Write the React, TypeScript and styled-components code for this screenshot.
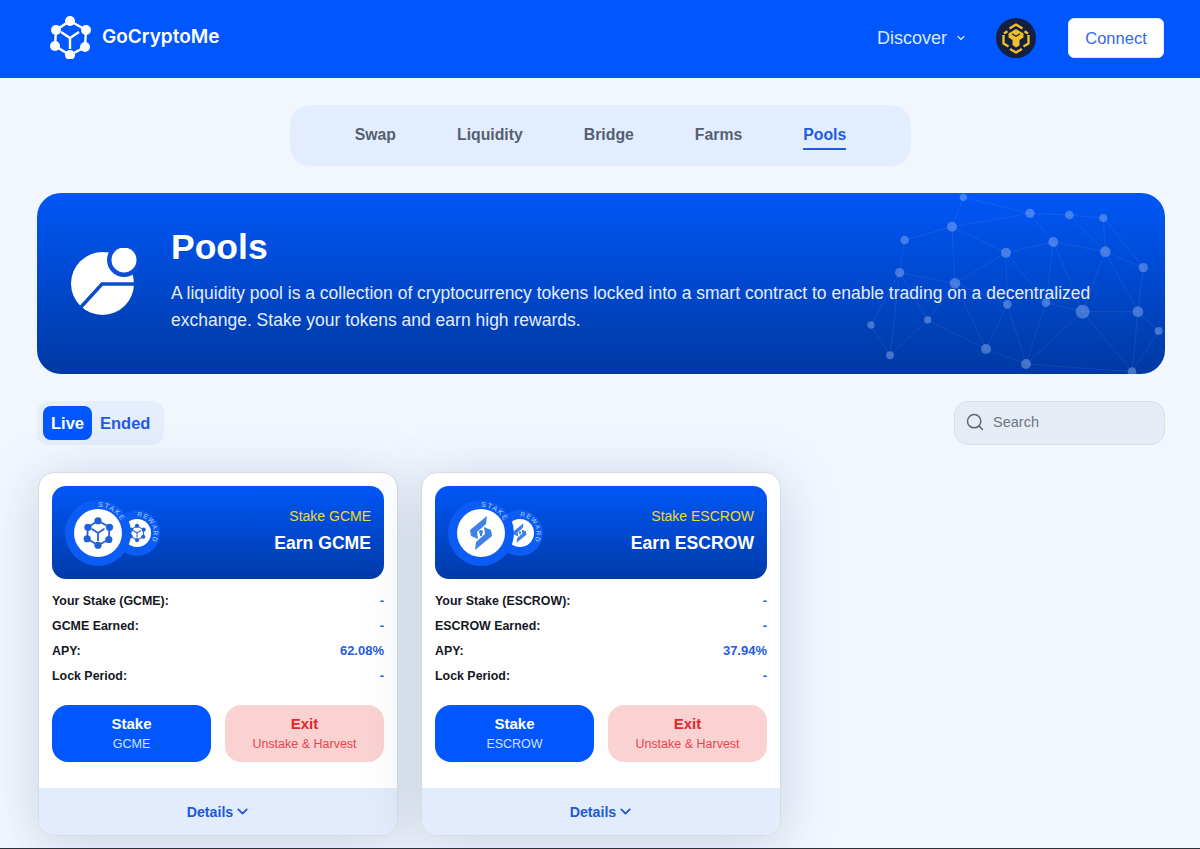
import React from "react";
import styled, { createGlobalStyle } from "styled-components";
import { ChevronDown, Search } from "lucide-react";

const GlobalStyle = createGlobalStyle`
  html, body {
    margin: 0;
    padding: 0;
    background: #f2f7ff;
    font-family: "Liberation Sans", Arial, sans-serif;
  }
  * { box-sizing: border-box; }
`;

const Page = styled.div`
  height: 849px;
  overflow: hidden;
  border-bottom: 1px solid #2c3038;
`;

const Header = styled.header`
  height: 78px;
  background: #0057ff;
  display: flex;
  align-items: center;
  padding: 0 36px 2px 48px;
`;

const Brand = styled.div`
  display: flex;
  align-items: center;
  gap: 10px;
  flex: 1;
  margin-top: -2px;
`;

const BrandName = styled.span`
  margin-bottom: 2px;
  color: #fff;
  font-family: Inter, sans-serif;
  font-size: 19px;
  font-weight: 600;
`;

const NavLink = styled.div`
  display: flex;
  align-items: center;
  gap: 8px;
  color: #dbe8ff;
  font-size: 18px;
`;

const ChainBadge = styled.div`
  display: flex;
  margin: 0 32px 0 29px;
`;

const ConnectButton = styled.button`
  width: 96px;
  height: 40px;
  border: 1px solid #dfe8ff;
  border-radius: 6px;
  background: #fff;
  color: #3567e6;
  font: 400 16.5px "Liberation Sans", Arial, sans-serif;
`;

const Main = styled.main`
  padding: 27px 35px 0 37px;
`;

const TabBar = styled.nav`
  width: 621px;
  height: 61px;
  margin: 0 0 27px 253px;
  border-radius: 20px;
  background: #e2eeff;
  display: flex;
  align-items: center;
  justify-content: center;
  gap: 61px;
`;

const Tab = styled.span<{ $active?: boolean }>`
  font-size: 15.8px;
  font-weight: 700;
  line-height: 26px;
  color: ${(p) => (p.$active ? "#1f5ce0" : "#565f70")};
  border-bottom: 2px solid ${(p) => (p.$active ? "#1f5ce0" : "transparent")};
`;

const Hero = styled.section`
  position: relative;
  height: 181px;
  border-radius: 24px;
  overflow: hidden;
  background: linear-gradient(180deg, #0057f7 0%, #0039a3 100%);
  display: flex;
  align-items: center;
  padding: 0 50px 0 34px;
  gap: 34px;
  color: #fff;
`;

const HeroNetwork = styled.svg`
  position: absolute;
  right: -15px;
  top: -3px;
`;

const HeroIcon = styled.svg`
  flex-shrink: 0;
  margin-top: -3px;
`;

const HeroCopy = styled.div`
  position: relative;
  margin-top: -9px;
`;

const HeroTitle = styled.h1`
  margin: 0 0 11px;
  font-size: 35.5px;
  line-height: 44px;
  font-weight: 700;
`;

const HeroText = styled.p`
  margin: 0;
  font-size: 17.5px;
  line-height: 27px;
  color: #e4edff;
`;

const FilterRow = styled.div`
  display: flex;
  justify-content: space-between;
  margin: 27px 0;
`;

const Toggle = styled.div`
  width: 127px;
  height: 44px;
  padding: 5px 6px;
  border-radius: 12px;
  background: #e5eefd;
  display: flex;
  align-items: center;
`;

const ToggleOption = styled.span<{ $active?: boolean }>`
  height: 34px;
  padding: 0 8px;
  border-radius: 8px;
  display: flex;
  align-items: center;
  font-size: 16.5px;
  font-weight: 700;
  color: ${(p) => (p.$active ? "#fff" : "#1f5ce0")};
  background: ${(p) => (p.$active ? "#0057ff" : "transparent")};
`;

const SearchBox = styled.div`
  width: 211px;
  height: 44px;
  padding: 0 0 2px 10px;
  border: 1px solid #d8dfeb;
  border-radius: 14px;
  background: #e6ecf6;
  display: flex;
  align-items: center;
  gap: 8px;
  color: #6d7684;
  font-size: 14.5px;
`;

const CardGrid = styled.div`
  display: flex;
  gap: 23px;
  padding-left: 1px;
`;

const Card = styled.article`
  width: 360px;
  height: 364px;
  border: 1px solid #d6dae2;
  border-radius: 16px;
  background: #fff;
  box-shadow: 0 8px 56px rgba(60, 80, 120, 0.22);
  overflow: hidden;
  display: flex;
  flex-direction: column;
`;

const CardBody = styled.div`
  flex: 1;
  padding: 13px 13px 0;
`;

const CardBanner = styled.div`
  height: 93px;
  border-radius: 14px;
  background: linear-gradient(180deg, #0057f7 0%, #003aa8 100%);
  display: flex;
  align-items: center;
  justify-content: space-between;
  padding: 0 13px 0 10px;
`;

const BannerCopy = styled.div`
  display: flex;
  flex-direction: column;
  align-items: flex-end;
  gap: 9px;
  margin-top: -4px;
`;

const StakeLabel = styled.span`
  color: #f4d63c;
  font-size: 14px;
`;

const EarnLabel = styled.span`
  color: #fff;
  font-size: 17.6px;
  font-weight: 700;
`;

const StatList = styled.dl`
  margin: 9px 0 17px;
`;

const StatRow = styled.div`
  height: 25px;
  display: flex;
  align-items: center;
  justify-content: space-between;
`;

const StatName = styled.dt`
  color: #14171f;
  font-size: 12.4px;
  font-weight: 700;
`;

const StatValue = styled.dd`
  margin: 0;
  color: #1f5ce0;
  font-size: 13px;
  font-weight: 700;
`;

const ActionRow = styled.div`
  display: grid;
  grid-template-columns: 159px 159px;
  gap: 14px;
`;

const ActionButton = styled.button<{ $exit?: boolean }>`
  height: 57px;
  padding: 0 0 2px;
  border: 0;
  border-radius: 16px;
  background: ${(p) => (p.$exit ? "#fbd2d2" : "#0057ff")};
  color: ${(p) => (p.$exit ? "#e5252d" : "#fff")};
  font-family: "Liberation Sans", Arial, sans-serif;
  display: flex;
  flex-direction: column;
  align-items: center;
  justify-content: center;
  gap: 5px;
`;

const ActionTitle = styled.span`
  font-size: 15px;
  font-weight: 700;
`;

const ActionSub = styled.span`
  font-size: 12.5px;
  opacity: 0.82;
`;

const DetailsBar = styled.div`
  height: 47px;
  padding-left: 2px;
  background: #e3ecfc;
  color: #2159d8;
  font-size: 14.2px;
  font-weight: 700;
  display: flex;
  align-items: center;
  justify-content: center;
  gap: 1px;
`;

const hexNodes: [number, number][] = [
  [21, 1],
  [37, 10],
  [36, 27],
  [21, 35],
  [6, 26],
  [7, 10],
];

const CubeMark = ({ color }: { color: string }) => (
  <g>
    <polygon points={hexNodes.map((n) => n.join(",")).join(" ")} fill="none" stroke={color} strokeWidth={2.4} />
    {hexNodes.map(([x, y]) => (
      <circle key={`${x}-${y}`} cx={x} cy={y} r={5} fill={color} />
    ))}
    <path d="M12 12l9 6 9-6M21 18v11" fill="none" stroke={color} strokeWidth={2.4} />
  </g>
);

const Logo = () => (
  <svg width="44" height="44" viewBox="-1 -5 44 44">
    <CubeMark color="#fff" />
  </svg>
);

const BnbLogo = () => (
  <svg width="40" height="40" viewBox="0 0 40 40">
    <circle cx="20" cy="20" r="20" fill="#13203f" />
    <g fill="none" stroke="#f0bd2e" strokeWidth="2.4" strokeLinejoin="round">
      <path d="M13.5 10.5L20 6.5l6.5 4" />
      <path d="M8 15.5l3.5-2.2M32 15.5l-3.5-2.2" />
      <path d="M7.5 17v8.5l5 3M32.5 17v8.5l-5 3" />
      <path d="M14 31l6 3.5 6-3.5" />
    </g>
    <path d="M12.5 15.5L20 11l7.5 4.5v4l-4 2.5v5.5L20 29.5l-3.5-2.5V22l-4-2.5z" fill="#f0bd2e" />
    <path d="M16 15.8l4 2.4 4-2.4" fill="none" stroke="#13203f" strokeWidth="1.2" />
  </svg>
);

const PoolsIcon = () => (
  <HeroIcon width="66" height="68" viewBox="0 0 66 68">
    <circle cx="31.5" cy="35.5" r="31.5" fill="#fff" />
    <circle cx="53" cy="12" r="17" fill="#0a4fd6" />
    <circle cx="53" cy="12" r="12.5" fill="#fff" />
    <path d="M10 59L31 36H66" fill="none" stroke="#0a4dcc" strokeWidth="3.4" />
  </HeroIcon>
);

const netNodes: [number, number, number][] = [
  [310, 22, 11],
  [510, 70, 14],
  [628, 75, 13],
  [730, 84, 12],
  [276, 110, 15],
  [134, 150, 13],
  [580, 156, 15],
  [736, 185, 16],
  [438, 188, 15],
  [850, 233, 14],
  [119, 248, 14],
  [285, 280, 16],
  [442, 343, 13],
  [558, 338, 13],
  [668, 365, 21],
  [834, 365, 16],
  [896, 423, 12],
  [203, 390, 11],
  [33, 405, 11],
  [378, 477, 15],
  [90, 496, 12],
  [498, 522, 15],
  [816, 545, 13],
];

const netLinks: [number, number][] = [
  [0, 4], [4, 5], [5, 10], [4, 1], [1, 2], [2, 3], [1, 6], [2, 7], [3, 7], [6, 7],
  [6, 8], [4, 8], [8, 11], [4, 11], [10, 11], [7, 9], [3, 9], [9, 15], [7, 15],
  [6, 14], [6, 13], [8, 12], [8, 13], [11, 12], [11, 19], [12, 19], [12, 21], [13, 21], [14, 21],
  [14, 15], [15, 16], [14, 7], [15, 22], [16, 22], [17, 11], [17, 19], [17, 20], [18, 20], [10, 17],
  [10, 20], [19, 21], [21, 22], [14, 22], [0, 1], [18, 10], [13, 14],
];

const NetworkArt = () => (
  <HeroNetwork width="320" height="190" viewBox="0 0 960 570">
    {netLinks.map(([a, b]) => (
      <line
        key={`${a}-${b}`}
        x1={netNodes[a][0]}
        y1={netNodes[a][1]}
        x2={netNodes[b][0]}
        y2={netNodes[b][1]}
        stroke="#fff"
        strokeOpacity="0.07"
        strokeWidth="3"
      />
    ))}
    {netNodes.map(([x, y, r]) => (
      <circle key={`${x}-${y}`} cx={x} cy={y} r={r} fill="#9dbdf5" fillOpacity="0.42" />
    ))}
  </HeroNetwork>
);

const escrowBand = "M6 -17L5 -9L-4 -1L-3 6L-10 3L-11 -3z";

const EscrowMark = ({ color }: { color: string }) => (
  <g fill={color}>
    <path d={escrowBand} />
    <path d={escrowBand} transform="rotate(180)" />
    <circle cx="0" cy="-1" r="2" />
    <rect x="-1" y="-1" width="2" height="4" />
  </g>
);

const TokenMark = ({ escrow, scale }: { escrow?: boolean; scale: number }) =>
  escrow ? (
    <g transform={`scale(${scale})`}>
      <EscrowMark color="#3f82e6" />
    </g>
  ) : (
    <g transform={`scale(${scale * 0.72}) translate(-21 -18)`}>
      <CubeMark color="#1f5fd8" />
    </g>
  );

const TokenPair = ({ id, escrow }: { id: string; escrow?: boolean }) => (
  <svg width="100" height="70" viewBox="0 0 100 70">
    <defs>
      <path id={`${id}-a`} d="M36 9A26 26 0 0 1 62 35" />
      <path id={`${id}-b`} d="M75 18.5A16.5 16.5 0 0 1 75 51.5" />
    </defs>
    <circle cx="75" cy="35" r="23" fill="#0a5cf5" />
    <circle cx="75" cy="35" r="14" fill="#fff" />
    <g transform="translate(75 35)">
      <TokenMark escrow={escrow} scale={0.58} />
    </g>
    <circle cx="36" cy="35" r="33" fill="#0a5cf5" />
    <circle cx="36" cy="35" r="24" fill="#fff" />
    <g transform="translate(36 35)">
      <TokenMark escrow={escrow} scale={1} />
    </g>
    <text fill="#bcd3ff" fontSize="7" letterSpacing="1.3" fontFamily="Liberation Sans, Arial, sans-serif">
      <textPath href={`#${id}-a`}>STAKE</textPath>
    </text>
    <text fill="#bcd3ff" fontSize="6.5" letterSpacing="1" fontFamily="Liberation Sans, Arial, sans-serif">
      <textPath href={`#${id}-b`}>REWARD</textPath>
    </text>
  </svg>
);

type Pool = { token: string; apy: string; escrow?: boolean };

const pools: Pool[] = [
  { token: "GCME", apy: "62.08%" },
  { token: "ESCROW", apy: "37.94%", escrow: true },
];

const tabs = ["Swap", "Liquidity", "Bridge", "Farms", "Pools"];

const PoolCard = ({ pool }: { pool: Pool }) => (
  <Card>
    <CardBody>
      <CardBanner>
        <TokenPair id={pool.token} escrow={pool.escrow} />
        <BannerCopy>
          <StakeLabel>Stake {pool.token}</StakeLabel>
          <EarnLabel>Earn {pool.token}</EarnLabel>
        </BannerCopy>
      </CardBanner>
      <StatList>
        <StatRow>
          <StatName>Your Stake ({pool.token}):</StatName>
          <StatValue>-</StatValue>
        </StatRow>
        <StatRow>
          <StatName>{pool.token} Earned:</StatName>
          <StatValue>-</StatValue>
        </StatRow>
        <StatRow>
          <StatName>APY:</StatName>
          <StatValue>{pool.apy}</StatValue>
        </StatRow>
        <StatRow>
          <StatName>Lock Period:</StatName>
          <StatValue>-</StatValue>
        </StatRow>
      </StatList>
      <ActionRow>
        <ActionButton>
          <ActionTitle>Stake</ActionTitle>
          <ActionSub>{pool.token}</ActionSub>
        </ActionButton>
        <ActionButton $exit>
          <ActionTitle>Exit</ActionTitle>
          <ActionSub>Unstake &amp; Harvest</ActionSub>
        </ActionButton>
      </ActionRow>
    </CardBody>
    <DetailsBar>
      Details
      <ChevronDown size={17} strokeWidth={2.6} />
    </DetailsBar>
  </Card>
);

const App: React.FC = () => {
  return (
    <Page>
      <GlobalStyle />
      <Header>
        <Brand>
          <Logo />
          <BrandName>GoCryptoMe</BrandName>
        </Brand>
        <NavLink>
          Discover
          <ChevronDown size={12} strokeWidth={2.4} />
        </NavLink>
        <ChainBadge>
          <BnbLogo />
        </ChainBadge>
        <ConnectButton>Connect</ConnectButton>
      </Header>
      <Main>
        <TabBar>
          {tabs.map((t) => (
            <Tab key={t} $active={t === "Pools"}>{t}</Tab>
          ))}
        </TabBar>
        <Hero>
          <NetworkArt />
          <PoolsIcon />
          <HeroCopy>
            <HeroTitle>Pools</HeroTitle>
            <HeroText>
              A liquidity pool is a collection of cryptocurrency tokens locked into a smart contract to enable trading on a
              decentralized exchange. Stake your tokens and earn high rewards.
            </HeroText>
          </HeroCopy>
        </Hero>
        <FilterRow>
          <Toggle>
            <ToggleOption $active>Live</ToggleOption>
            <ToggleOption>Ended</ToggleOption>
          </Toggle>
          <SearchBox>
            <Search size={20} color="#5d6675" strokeWidth={1.8} />
            Search
          </SearchBox>
        </FilterRow>
        <CardGrid>
          {pools.map((p) => (
            <PoolCard key={p.token} pool={p} />
          ))}
        </CardGrid>
      </Main>
    </Page>
  );
};

export default App;
